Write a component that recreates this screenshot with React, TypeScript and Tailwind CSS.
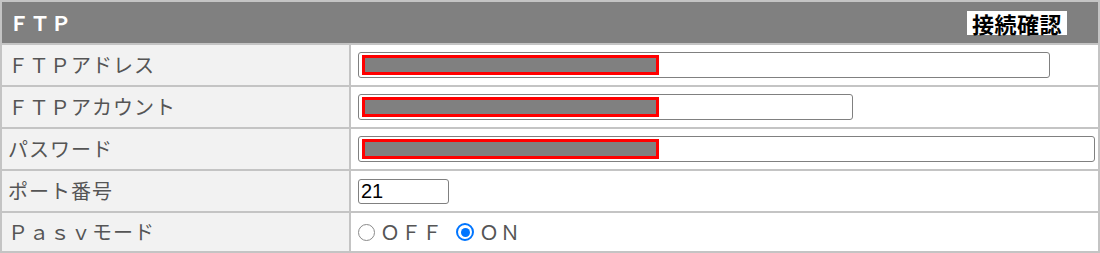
import React from "react";

const jp = { fontFamily: '"Noto Sans CJK JP", "Noto Sans", sans-serif' };

function Row({ label, children, last }: { label: string; children: React.ReactNode; last?: boolean }) {
  return (
    <div className={`flex border-t-2 border-[#c4c4c4] ${last ? "h-[40px]" : "h-[42px]"}`}>
      <div className="w-[347px] shrink-0 bg-[#f2f2f2] flex items-center pl-[6px] text-[20px] tracking-[1px] text-[#555555] leading-none" style={jp}>
        {label}
      </div>
      <div className="w-[2px] shrink-0 bg-[#c4c4c4]" />
      <div className="flex-1 bg-white flex items-center pl-[7px]">{children}</div>
    </div>
  );
}

function MaskedInput({ width }: { width: string }) {
  return (
    <div className={`${width} h-[26px] border border-[#808080] rounded-[3px] bg-white flex items-center pl-[3px]`}>
      <div className="w-[297px] h-[20px] border-[3px] border-[#ff0000] bg-[#808080]" />
    </div>
  );
}

export default function App() {
  return (
    <div className="w-[1100px] h-[253px] border-2 border-[#c4c4c4] bg-white overflow-hidden">
      <div className="h-[41px] bg-[#808080] flex items-center justify-between pl-[7px] pr-[31px]">
        <span className="text-white font-bold text-[20px] tracking-[1px] leading-none" style={jp}>
          ＦＴＰ
        </span>
        <span className="bg-white text-black font-bold text-[22px] leading-[24px] h-[24px] px-[5px] mt-[1px] tracking-[0.5px]" style={jp}>
          接続確認
        </span>
      </div>
      <Row label="ＦＴＰアドレス">
        <MaskedInput width="w-[692px]" />
      </Row>
      <Row label="ＦＴＰアカウント">
        <MaskedInput width="w-[495px]" />
      </Row>
      <Row label="パスワード">
        <MaskedInput width="w-[737px]" />
      </Row>
      <Row label="ポート番号">
        <div className="w-[91px] h-[25px] border border-[#808080] rounded-[3px] bg-white flex items-center pl-[2px] text-[20px] text-black leading-none" style={{ fontFamily: '"Liberation Sans Narrow", "Liberation Sans", sans-serif' }}>
          21
        </div>
      </Row>
      <Row label="Ｐａｓｖモード" last>
        <div className="flex items-center text-[20px] text-[#555555] leading-none tracking-[1px]" style={jp}>
          <span className="w-[17px] h-[17px] rounded-full border border-[#8a8a8a] bg-white mr-[5px]" />
          <span>ＯＦＦ</span>
          <span className="w-[18px] h-[18px] rounded-full border-2 border-[#0075ff] bg-white flex items-center justify-center ml-[13px] mr-[5px]">
            <span className="w-[9px] h-[9px] rounded-full bg-[#0075ff]" />
          </span>
          <span>ＯＮ</span>
        </div>
      </Row>
    </div>
  );
}
